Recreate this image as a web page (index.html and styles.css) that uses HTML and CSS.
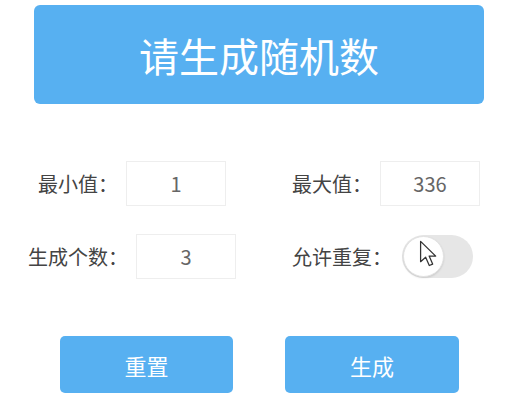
FILE: index.html
```html
<!DOCTYPE html>
<html lang="zh-CN">
<head>
<meta charset="utf-8">
<link rel="stylesheet" href="styles.css">
</head>
<body>
<div class="page">
  <div class="title">请生成随机数</div>
  <div class="form">
    <div class="field"><span class="label">最小值：</span><div class="box">1</div></div>
    <div class="field right"><span class="label">最大值：</span><div class="box">336</div></div>
    <div class="field"><span class="label">生成个数：</span><div class="box">3</div></div>
    <div class="field right"><span class="label">允许重复：</span>
      <div class="switch">
        <div class="knob"></div>
        <svg class="cursor" width="20" height="28" viewBox="0 0 14 20">
          <path d="M1 1 L1 15.5 L4.6 12.3 L7.2 18.2 L9.6 17.2 L7.1 11.5 L11.8 11.5 Z" fill="#fff" stroke="#333" stroke-width="0.9" stroke-linejoin="round"/>
        </svg>
      </div>
    </div>
  </div>
  <div class="actions">
    <button class="btn">重置</button>
    <button class="btn">生成</button>
  </div>
</div>
</body>
</html>
```

FILE: styles.css
```css
* { box-sizing: border-box; }
body {
  margin: 0;
  background: #fff;
  font-family: "Noto Sans CJK SC", "Noto Sans", sans-serif;
}
.page {
  width: 522px;
  padding-top: 5px;
}
.title {
  margin-left: 34px;
  width: 450px;
  height: 99px;
  background: #57b0f1;
  border-radius: 6px;
  color: #fff;
  font-size: 40px;
  display: flex;
  align-items: center;
  justify-content: center;
}
.form {
  margin-top: 57px;
  padding-left: 5px;
  display: grid;
  grid-template-columns: 254px 254px;
  row-gap: 28px;
}
.field {
  display: flex;
  align-items: center;
  justify-content: center;
  gap: 8px;
  height: 45px;
}
.field.right {
  justify-content: flex-start;
  padding-left: 33px;
}
.label {
  font-size: 20px;
  color: #444;
  white-space: nowrap;
}
.box {
  width: 100px;
  height: 45px;
  border: 1px solid #eeeeee;
  color: #666;
  font-size: 20px;
  display: flex;
  align-items: center;
  justify-content: center;
}
.switch {
  position: relative;
  width: 71px;
  height: 43px;
  border-radius: 22px;
  background: #e6e6e6;
  margin-left: 2px;
}
.knob {
  position: absolute;
  left: 1px;
  top: 1px;
  width: 41px;
  height: 41px;
  border-radius: 50%;
  background: #fff;
  border: 1px solid #e2e2e2;
  box-shadow: 0 1px 2px rgba(0,0,0,0.12);
}
.cursor {
  position: absolute;
  left: 17px;
  top: 5px;
}
.actions {
  margin-top: 57px;
  margin-left: 60px;
  display: flex;
  gap: 52px;
}
.btn {
  width: 173px;
  height: 57px;
  border: none;
  border-radius: 5px;
  background: #57b0f1;
  color: #fff;
  font-family: "Noto Sans CJK SC", sans-serif;
  font-size: 22px;
  padding: 0;
}
.btn + .btn {
  width: 174px;
}
```
